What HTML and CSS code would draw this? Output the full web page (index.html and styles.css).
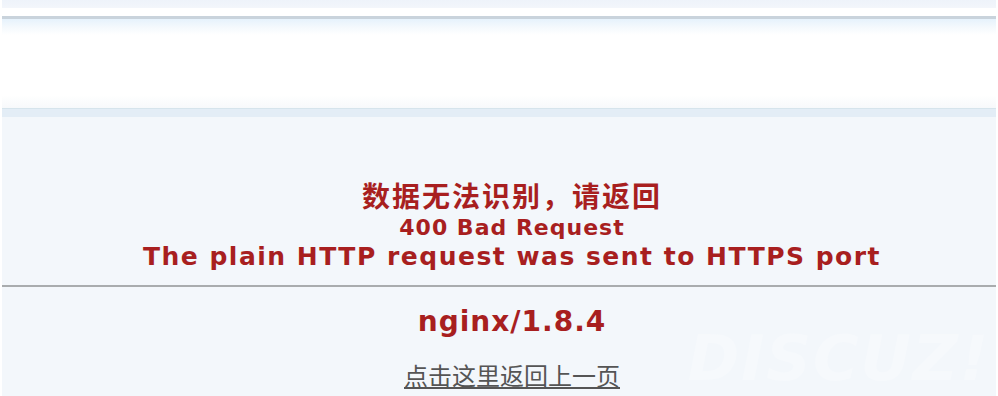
FILE: index.html
```html
<!DOCTYPE html>
<html lang="zh-CN">
<head>
<meta charset="utf-8">
<title>提示信息</title>
<link rel="stylesheet" href="styles.css">
</head>
<body>
<div class="page">
  <div class="strip-top"></div>
  <div class="strip-gap"></div>
  <div class="nav"></div>
  <div class="band"></div>
  <main class="main">
    <div class="message">
      <h1 class="title">数据无法识别，请返回</h1>
      <div class="code">400 Bad Request</div>
      <div class="detail">The plain HTTP request was sent to HTTPS port</div>
    </div>
    <hr class="rule">
    <div class="server">nginx/1.8.4</div>
    <a class="back" href="#">点击这里返回上一页</a>
    <div class="watermark">DISCUZ!</div>
  </main>
</div>
</body>
</html>
```
FILE: styles.css
```css
html, body {
  margin: 0;
  padding: 0;
  background: #ffffff;
}
body {
  font-family: "DejaVu Sans", Verdana, sans-serif;
  overflow: hidden;
  height: 396px;
}
.page {
  margin: 0 2px;
  display: flex;
  flex-direction: column;
  height: 396px;
}
.strip-top {
  height: 8px;
  background: linear-gradient(#eef3fa, #f3f6fb);
}
.strip-gap {
  height: 8px;
  background: #ffffff;
}
.nav {
  height: 89px;
  border-top: 3px solid #c9d3dc;
  background: linear-gradient(to bottom, #e6f2fc 0, #f4f9fd 8px, #ffffff 16px, #ffffff 76px, #f7f9fb 89px);
}
.band {
  height: 8px;
  border-top: 1px solid #d6e4ec;
  background: #e3edf6;
}
.main {
  flex: 1;
  position: relative;
  overflow: hidden;
  background: #f3f7fb;
  display: flex;
  flex-direction: column;
  align-items: center;
  padding-left: 26px;
}
.message {
  padding-top: 58px;
  display: flex;
  flex-direction: column;
  align-items: center;
  color: #a81f1f;
  font-weight: bold;
}
.title {
  margin: 0;
  font-family: "Noto Sans CJK SC", sans-serif;
  font-size: 28px;
  line-height: 40px;
  letter-spacing: 2px;
  font-weight: bold;
}
.code {
  font-size: 22px;
  line-height: 26px;
  letter-spacing: 1px;
}
.detail {
  font-size: 25px;
  line-height: 32px;
  letter-spacing: 1.5px;
}
.rule {
  align-self: stretch;
  margin: 12px 0 0 -26px;
  border: 0;
  height: 2px;
  background: #a9acae;
}
.server {
  margin-top: 19px;
  color: #a81f1f;
  font-weight: bold;
  font-size: 28px;
  line-height: 32px;
  letter-spacing: 1px;
}
.back {
  margin-top: 22px;
  font-family: "Noto Sans CJK SC", sans-serif;
  font-size: 24px;
  line-height: 30px;
  color: #555555;
  text-decoration: underline;
  position: relative;
  z-index: 1;
}
.watermark {
  position: absolute;
  right: 6px;
  top: 211px;
  font-family: "DejaVu Sans", sans-serif;
  font-weight: bold;
  font-style: italic;
  font-size: 62px;
  line-height: 62px;
  letter-spacing: 2px;
  color: #f6f9fc;
}
```
